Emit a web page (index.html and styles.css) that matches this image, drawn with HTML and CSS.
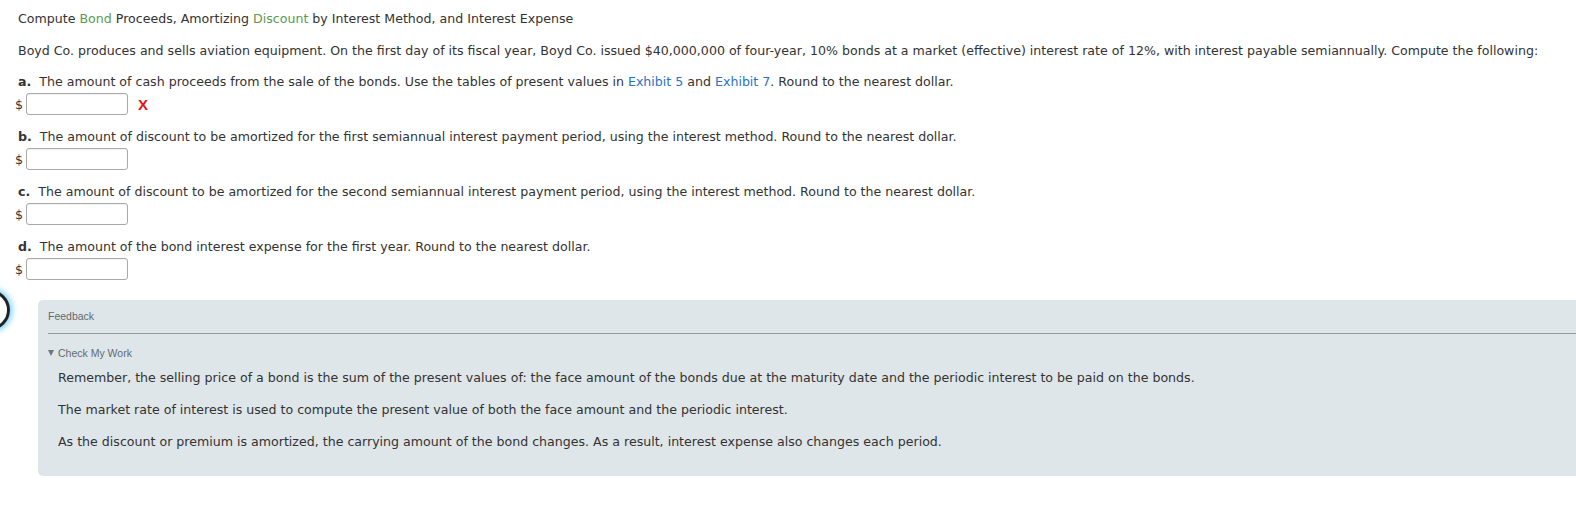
FILE: index.html
```html
<!DOCTYPE html>
<html>
<head>
<meta charset="utf-8">
<link rel="stylesheet" href="styles.css">
</head>
<body>
<div class="page">
  <p class="title">Compute <span class="kw">Bond</span> Proceeds, Amortizing <span class="kw">Discount</span> by Interest Method, and Interest Expense</p>
  <p class="intro">Boyd Co. produces and sells aviation equipment. On the first day of its fiscal year, Boyd Co. issued $40,000,000 of four-year, 10% bonds at a market (effective) interest rate of 12%, with interest payable semiannually. Compute the following:</p>

  <div class="q">
    <p class="qtext"><b>a.</b>&nbsp; The amount of cash proceeds from the sale of the bonds. Use the tables of present values in <a class="link">Exhibit 5</a> and <a class="link">Exhibit 7</a>. Round to the nearest dollar.</p>
    <div class="answer"><span class="cur">$</span><span class="field"></span><span class="wrong">X</span></div>
  </div>
  <div class="q">
    <p class="qtext"><b>b.</b>&nbsp; The amount of discount to be amortized for the first semiannual interest payment period, using the interest method. Round to the nearest dollar.</p>
    <div class="answer"><span class="cur">$</span><span class="field"></span></div>
  </div>
  <div class="q">
    <p class="qtext"><b>c.</b>&nbsp; The amount of discount to be amortized for the second semiannual interest payment period, using the interest method. Round to the nearest dollar.</p>
    <div class="answer"><span class="cur">$</span><span class="field"></span></div>
  </div>
  <div class="q">
    <p class="qtext"><b>d.</b>&nbsp; The amount of the bond interest expense for the first year. Round to the nearest dollar.</p>
    <div class="answer"><span class="cur">$</span><span class="field"></span></div>
  </div>

  <div class="feedback-wrap">
    <span class="ring"></span>
    <div class="feedback">
      <div class="fb-head">Feedback</div>
      <div class="fb-toggle"><span class="tri"></span>Check My Work</div>
      <div class="fb-body">
        <p>Remember, the selling price of a bond is the sum of the present values of: the face amount of the bonds due at the maturity date and the periodic interest to be paid on the bonds.</p>
        <p>The market rate of interest is used to compute the present value of both the face amount and the periodic interest.</p>
        <p>As the discount or premium is amortized, the carrying amount of the bond changes. As a result, interest expense also changes each period.</p>
      </div>
    </div>
  </div>
</div>
</body>
</html>
```

FILE: styles.css
```css
html, body {
  margin: 0;
  padding: 0;
  background: #ffffff;
  overflow: hidden;
}
body {
  font-family: "DejaVu Sans", Verdana, sans-serif;
  font-size: 12.6px;
  color: #333333;
}
.page {
  padding: 10px 0 0 18px;
}
p {
  margin: 0;
  line-height: 17px;
}
.title {
  margin-bottom: 15px;
}
.kw {
  color: #5b9a4f;
}
.intro {
  margin-bottom: 14px;
  white-space: nowrap;
}
.link {
  color: #2a72c5;
}
.q {
  margin-bottom: 13px;
}
.qtext {
  margin-bottom: 3px;
}
.qtext b {
  font-weight: bold;
}
.answer {
  display: flex;
  align-items: center;
  height: 22px;
  margin-left: -3px;
}
.cur {
  color: #333;
  width: 11px;
  text-align: left;
}
.field {
  width: 100px;
  height: 20px;
  border: 1px solid #a9a9a9;
  border-radius: 3px;
  background: #fff;
  box-shadow: inset 0 1px 1px rgba(0,0,0,0.06);
}
.wrong {
  color: #e8100e;
  font-family: "Liberation Sans", Arial, sans-serif;
  font-weight: bold;
  font-size: 15px;
  margin-left: 10px;
}
.feedback-wrap {
  position: relative;
  margin-top: 20px;
  margin-left: 20px;
}
.ring {
  position: absolute;
  left: -68px;
  top: -10px;
  width: 34px;
  height: 34px;
  border: 3px solid #222;
  border-radius: 50%;
  box-shadow: 0 0 6px 2px #6cd0ff;
}
.feedback {
  background: #dfe6e9;
  border-radius: 5px 0 0 5px;
  padding: 8px 0 0 10px;
  height: 168px;
}
.fb-head {
  font-family: "Liberation Sans", Arial, sans-serif;
  font-size: 10.5px;
  color: #5f6b70;
  line-height: 14px;
  padding-top: 1px;
  padding-bottom: 10px;
  border-bottom: 1px solid #949a9c;
}
.fb-toggle {
  font-family: "Liberation Sans", Arial, sans-serif;
  font-size: 10.5px;
  color: #5f6b70;
  line-height: 14px;
  margin-top: 12px;
  display: flex;
  align-items: center;
}
.tri {
  width: 0;
  height: 0;
  border-left: 3px solid transparent;
  border-right: 3px solid transparent;
  border-top: 6px solid #6f777a;
  margin-right: 4px;
  margin-top: -1px;
}
.fb-body {
  padding-left: 10px;
  margin-top: 9px;
}
.fb-body p {
  margin-bottom: 15px;
}
```
